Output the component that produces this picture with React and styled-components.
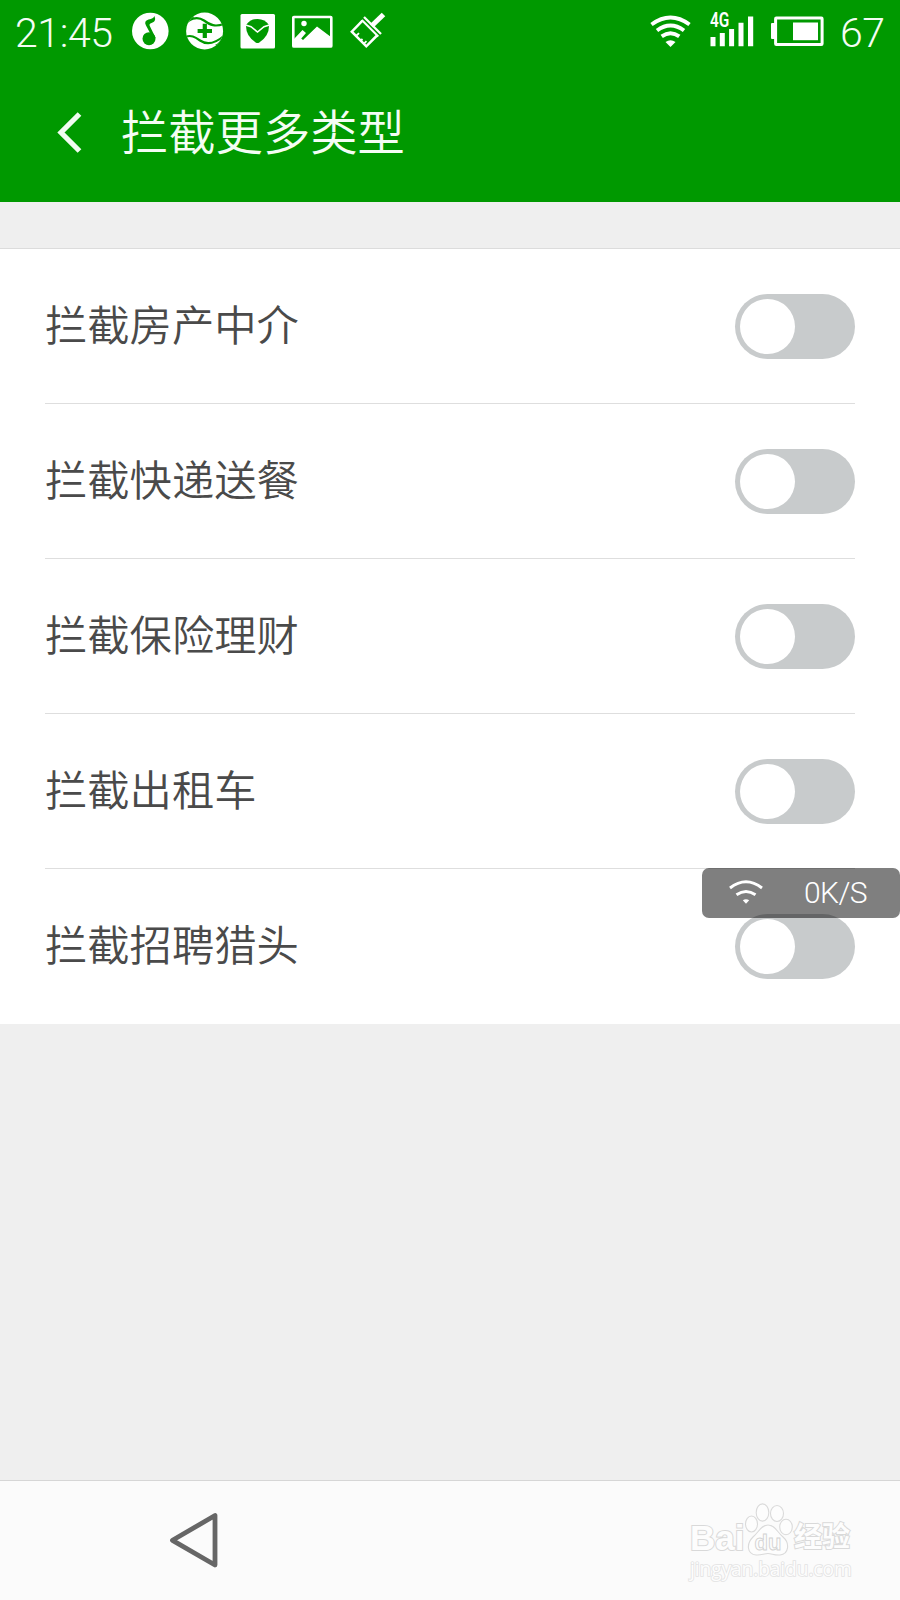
import React from "react";
import styled, { createGlobalStyle } from "styled-components";

const GlobalStyle = createGlobalStyle`
  *, *::before, *::after { box-sizing: border-box; }
  body { margin: 0; background: #efefef; }
`;

const Screen = styled.div`
  position: relative;
  width: 900px;
  height: 1600px;
  display: flex;
  flex-direction: column;
  overflow: hidden;
  background: #efefef;
  font-family: Roboto, "Noto Sans CJK SC", sans-serif;
`;

const Header = styled.header`
  height: 202px;
  flex: none;
  background: #009900;
  color: #fff;
`;

const StatusBar = styled.div`
  height: 64px;
  display: flex;
  align-items: flex-start;
  padding: 0 16px 0 15px;
`;

const StatusText = styled.span`
  width: ${(p) => p.$width}px;
  margin-top: 9px;
  margin-left: ${(p) => p.$gap || 0}px;
  font-size: 41px;
  line-height: 48px;
  font-weight: 300;
  letter-spacing: -0.4px;
  white-space: nowrap;
  color: #f4fdf4;
`;

const StatusIcon = styled.svg`
  display: block;
  flex: none;
  margin-top: 10px;
  margin-left: ${(p) => p.$gap}px;
`;

const Spacer = styled.div`
  flex: 1;
`;

const Signal = styled.div`
  position: relative;
  margin-left: 18px;
`;

const NetworkType = styled.span`
  position: absolute;
  left: 0;
  top: 12px;
  font-size: 19.5px;
  line-height: 18px;
  font-weight: 600;
  transform: scaleX(0.79);
  transform-origin: left top;
`;

const TitleBar = styled.div`
  height: 138px;
  display: flex;
  align-items: flex-start;
  padding: 32px 0 0 54px;
`;

const BackButton = styled.button`
  width: 32px;
  height: 72px;
  margin: 0 35px 0 0;
  padding: 0;
  border: 0;
  background: none;
  display: flex;
  align-items: center;
`;

const Title = styled.h1`
  margin: 3px 0 0;
  font-size: 47.3px;
  line-height: 70px;
  font-weight: 350;
  color: #f4fdf4;
`;

const Card = styled.main`
  margin-top: 46px;
  padding: 0 45px;
  border-top: 1px solid #dcdcdc;
  background: #fff;
`;

const Row = styled.div`
  height: 155px;
  display: flex;
  align-items: center;
  justify-content: space-between;
  border-bottom: 1px solid #dedede;
  &:last-child { border-bottom-color: #fff; }
`;

const Label = styled.span`
  padding-top: 2px;
  font-size: 42.3px;
  line-height: 64px;
  font-weight: 350;
  color: #4a4a4a;
`;

const Switch = styled.button`
  width: 120px;
  height: 65px;
  border: 0;
  border-radius: 33px;
  padding: 5px;
  background: #c8cbcc;
`;

const Knob = styled.span`
  display: block;
  width: 55px;
  height: 55px;
  border-radius: 50%;
  background: #fff;
`;

const SpeedBadge = styled.div`
  position: absolute;
  top: 868px;
  right: 0;
  width: 198px;
  height: 50px;
  border-radius: 7px;
  background: rgba(0, 0, 0, 0.5);
  color: #fff;
  display: flex;
  align-items: center;
  padding-left: 26px;
`;

const SpeedText = styled.span`
  margin-left: 40px;
  font-size: 30px;
  line-height: 48px;
  font-weight: 300;
  letter-spacing: -0.6px;
`;

const NavBar = styled.nav`
  position: relative;
  height: 120px;
  margin-top: auto;
  border-top: 1px solid #d6d6d6;
  background: #fbfbfb;
  padding: 30px 0 0 168px;
`;

const Watermark = styled.div`
  position: absolute;
  left: 690px;
  top: 22px;
  width: 166px;
  color: #fdfdfd;
  font-family: "Liberation Sans", "Noto Sans CJK SC", sans-serif;
`;

const BrandLine = styled.div`
  display: flex;
  align-items: flex-end;
  height: 54px;
`;

const BrandText = styled.span`
  font-size: ${(p) => p.$size}px;
  line-height: ${(p) => p.$height}px;
  height: ${(p) => p.$height}px;
  width: ${(p) => p.$width}px;
  font-weight: 700;
  white-space: nowrap;
  -webkit-text-stroke: 2px #d9d9d9;
  paint-order: stroke fill;
`;

const SiteText = styled.div`
  font-family: "Open Sans", sans-serif;
  font-size: 19.2px;
  line-height: 24px;
  letter-spacing: -0.1px;
  white-space: nowrap;
  -webkit-text-stroke: 1.7px #e3e3e3;
  paint-order: stroke fill;
`;

const items = ["拦截房产中介", "拦截快递送餐", "拦截保险理财", "拦截出租车", "拦截招聘猎头"];

const MusicIcon = () => (
  <StatusIcon $gap={0} width="38" height="42" viewBox="131 10 38 42">
    <circle cx="150.3" cy="31" r="18.3" fill="#fff" />
    <circle cx="149" cy="38.7" r="6.5" fill="#090" />
    <path d="M153 38.5L146 25.5Q143.5 21 148.5 19.5Q153.5 18.5 154.5 16Q156.5 21.5 151.5 23Q148.7 23.8 149.8 26L155.7 38Z" fill="#090" />
  </StatusIcon>
);

const CareIcon = () => (
  <StatusIcon $gap={16} width="40" height="42" viewBox="185 10 40 42">
    <clipPath id="care-disc"><circle cx="204.6" cy="31" r="18.5" /></clipPath>
    <g clipPath="url(#care-disc)">
      <path d="M185 10H225V52H185Z" fill="#fff" />
      <path d="M185 25C188 19 197 15.5 204 20.5C210 25 215 27.5 225 23.5" fill="none" stroke="#090" strokeWidth="2.2" />
      <path d="M185 37C191 34.5 195 37 200 40.5C208 46 216 43 225 35" fill="none" stroke="#090" strokeWidth="2.2" />
      <path d="M185 14V28C187 21 191 18.5 194 17.5L192 14Z" fill="#090" />
      <path d="M225 34V47L215 45C219 43 222 39 225 34Z" fill="#090" />
    </g>
    <path d="M204.8 23.7v14.4M197.6 31h14.4" stroke="#090" strokeWidth="4.2" />
  </StatusIcon>
);

const ShieldIcon = () => (
  <StatusIcon $gap={15} width="36" height="42" viewBox="240 10 36 42">
    <rect x="240.5" y="14" width="34.5" height="34.5" rx="1.5" fill="#fff" />
    <path d="M246 25Q250 19 257.6 18.9Q265 19 269 25Q269.5 36 259 42.7Q257.5 43.5 256 42.7Q245.5 36 246 25Z" fill="#090" />
    <path d="M245.5 25L251 26.7L257.5 32L264 26.7L269.5 25" fill="none" stroke="#fff" strokeWidth="1.6" />
  </StatusIcon>
);

const GalleryIcon = () => (
  <StatusIcon $gap={15} width="42" height="42" viewBox="291 10 42 42">
    <rect x="293.3" y="17" width="38" height="29.5" rx="0.6" fill="none" stroke="#fff" strokeWidth="2.6" />
    <circle cx="304" cy="23.5" r="2.7" fill="#fff" />
    <path d="M294 39L302.5 30L306 33L301.2 38.5L303 40L317 26.5L331 37V46.5H294Z" fill="#fff" />
  </StatusIcon>
);

const BrushIcon = () => (
  <StatusIcon $gap={17} width="38" height="42" viewBox="350 10 38 42">
    <path d="M362.5 20.7L351.8 31.7L366.3 46.3L377.5 35" fill="none" stroke="#fff" strokeWidth="2.5" />
    <path d="M364 17L381 34" stroke="#fff" strokeWidth="2.3" />
    <path d="M361.8 20L378.3 36.5" stroke="#fff" strokeWidth="2" />
    <path d="M371.5 26L383.5 14.5" stroke="#fff" strokeWidth="5" />
    <path d="M356 36L359 33.2M360.5 41L362.5 39M363.5 44.2L366.5 41.2" stroke="#fff" strokeWidth="1.8" />
  </StatusIcon>
);

const WifiIcon = () => (
  <StatusIcon $gap={0} width="42" height="42" viewBox="650 10 42 42">
    <g fill="none" stroke="#fff" strokeWidth="3.9">
      <path d="M651.5 24.5Q670.5 10.5 689.5 24.5" />
      <path d="M657 30.5Q670.5 20.5 684 30.5" />
      <path d="M661.7 36.3Q670.5 30 679.3 36.3" />
    </g>
    <path d="M665.5 42Q670.5 38.5 675.5 42L670.5 47Z" fill="#fff" />
  </StatusIcon>
);

const SignalIcon = () => (
  <Signal>
    <StatusIcon $gap={0} width="44" height="42" viewBox="710 10 44 42">
      <path d="M710.5 37h5v9.3h-5zM719.8 33h5v13.3h-5zM729.1 29h5v17.3h-5zM738.5 22.7h5v23.6h-5zM748 16.5h5.2v29.8h-5.2z" fill="#fff" />
    </StatusIcon>
    <NetworkType>4G</NetworkType>
  </Signal>
);

const BatteryIcon = () => (
  <StatusIcon $gap={16} width="56" height="42" viewBox="770 10 56 42">
    <rect x="775.6" y="18" width="46.5" height="26.5" rx="0.7" fill="none" stroke="#fff" strokeWidth="3" />
    <path d="M771 24q0-1 1-1h3v16h-3q-1 0-1-1z" fill="#fff" />
    <rect x="793" y="22.5" width="25" height="17.7" fill="#fff" />
  </StatusIcon>
);

const PawSvg = styled.svg`
  flex: none;
`;

const Paw = () => (
  <PawSvg width="50" height="54" viewBox="0 0 50 54">
    <g fill="#fdfdfd" stroke="#dadada" strokeWidth="1.1">
      <ellipse cx="7.5" cy="21" rx="6" ry="8" />
      <ellipse cx="18.5" cy="9.5" rx="6.3" ry="8.6" />
      <ellipse cx="33" cy="10.5" rx="6.5" ry="8" />
      <ellipse cx="42" cy="24" rx="6.3" ry="7.8" />
      <path d="M24 22C31 22 33 29 39 34C46 40 45 51 36 52C30 52.5 28 50.5 24 50.5C20 50.5 17 52.5 12 52C3 51 2 41 9 34C15 29 17 22 24 22Z" />
    </g>
    <text x="24" y="47" textAnchor="middle" fontFamily="Liberation Sans, sans-serif" fontWeight="700" fontSize="22" fill="#fdfdfd" stroke="#d2d2d2" strokeWidth="0.9">du</text>
  </PawSvg>
);

export default function App() {
  return (
    <>
      <GlobalStyle />
      <Screen>
        <Header>
          <StatusBar>
            <StatusText $width={116}>21:45</StatusText>
            <MusicIcon />
            <CareIcon />
            <ShieldIcon />
            <GalleryIcon />
            <BrushIcon />
            <Spacer />
            <WifiIcon />
            <SignalIcon />
            <BatteryIcon />
            <StatusText $gap={14} $width={44}>67</StatusText>
          </StatusBar>
          <TitleBar>
            <BackButton aria-label="返回">
              <svg width="32" height="44" viewBox="54 110 32 44">
                <path d="M79.5 114L61 132.5L79.5 151" fill="none" stroke="#f1fcf1" strokeWidth="5.2" />
              </svg>
            </BackButton>
            <Title>拦截更多类型</Title>
          </TitleBar>
        </Header>
        <Card>
          {items.map((label) => (
            <Row key={label}>
              <Label>{label}</Label>
              <Switch role="switch" aria-checked="false" aria-label={label}>
                <Knob />
              </Switch>
            </Row>
          ))}
        </Card>
        <SpeedBadge>
          <svg width="36" height="30" viewBox="728 878 36 30">
            <g fill="none" stroke="#fff" strokeWidth="2.9">
              <path d="M730 888Q746 875.5 762 888" />
              <path d="M736.5 894.8Q746 888 755.5 894.8" />
            </g>
            <path d="M742.8 900.3Q746 898 749.2 900.3L746 903.7Z" fill="#fff" />
          </svg>
          <SpeedText>0K/S</SpeedText>
        </SpeedBadge>
        <NavBar>
          <svg width="52" height="60" viewBox="168 1510 52 60">
            <path d="M215 1514.5V1564L172.5 1539.3Z" fill="none" stroke="#666" strokeWidth="4.8" strokeLinejoin="round" />
          </svg>
          <Watermark>
            <BrandLine>
              <BrandText $size={35} $height={39} $width={54}>Bai</BrandText>
              <Paw />
              <BrandText $size={28} $height={38} $width={56}>经验</BrandText>
            </BrandLine>
            <SiteText>jingyan.baidu.com</SiteText>
          </Watermark>
        </NavBar>
      </Screen>
    </>
  );
}
